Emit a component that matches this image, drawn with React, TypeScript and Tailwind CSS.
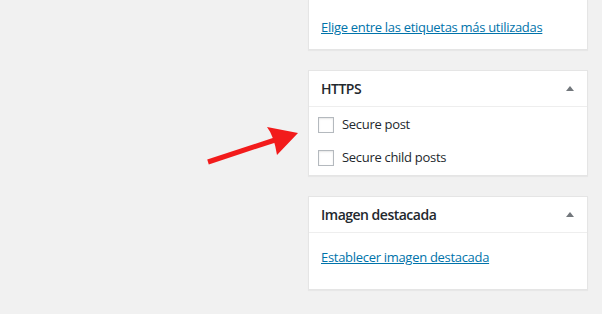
import React from 'react';

const font = { fontFamily: '"Open Sans", "Noto Sans", sans-serif' };

const Toggle = () => (
  <svg width="8" height="5" viewBox="0 0 8 5" className="shrink-0">
    <path d="M4 0 L8 5 L0 5 Z" fill="#72777c" />
  </svg>
);

const PanelHeader: React.FC<{ title: string }> = ({ title }) => (
  <div className="h-[36px] flex items-center justify-between pl-3 pr-[13px] border-b border-[#eeeeee]">
    <h2 className="text-[14px] font-semibold text-[#23282d] tracking-[-0.5px]">{title}</h2>
    <Toggle />
  </div>
);

const Checkbox: React.FC<{ label: string }> = ({ label }) => (
  <label className="flex items-center h-[16px]">
    <span className="w-[16px] h-[16px] border border-[#b4b9be] bg-white shadow-[inset_0_1px_2px_rgba(0,0,0,0.1)] shrink-0" />
    <span className="ml-2 text-[13px] text-[#23282d] tracking-[-0.3px]">{label}</span>
  </label>
);

export default function App() {
  return (
    <div className="relative w-[602px] h-[314px] overflow-hidden bg-[#f1f1f1] pl-[308px]" style={font}>
      <div className="w-[280px] h-[50px] bg-white border-x border-b border-[#e5e5e5] shadow-[0_1px_1px_rgba(0,0,0,0.04)] px-3 pt-[14px]">
        <a className="text-[13px] text-[#0073aa] underline leading-[18px] tracking-[-0.3px]">Elige entre las etiquetas más utilizadas</a>
      </div>

      <div className="mt-[20px] w-[280px] h-[106px] bg-white border border-[#e5e5e5] shadow-[0_1px_1px_rgba(0,0,0,0.04)]">
        <PanelHeader title="HTTPS" />
        <div className="pl-[9px] pt-[10px] flex flex-col gap-[17px]">
          <Checkbox label="Secure post" />
          <Checkbox label="Secure child posts" />
        </div>
      </div>

      <div className="mt-[20px] w-[280px] h-[94px] bg-white border border-[#e5e5e5] shadow-[0_1px_1px_rgba(0,0,0,0.04)]">
        <PanelHeader title="Imagen destacada" />
        <div className="px-3 pt-[11px]">
          <a className="text-[13px] text-[#0073aa] underline leading-[18px] tracking-[-0.3px]">Establecer imagen destacada</a>
        </div>
      </div>

      <svg className="absolute left-0 top-0 pointer-events-none" width="602" height="314" viewBox="0 0 602 314">
        <line x1="208" y1="162" x2="278" y2="139" stroke="#f21b1b" strokeWidth="5" />
        <path d="M298 133 L267 127 Q274 136 277 155 Z" fill="#f21b1b" />
      </svg>
    </div>
  );
}
